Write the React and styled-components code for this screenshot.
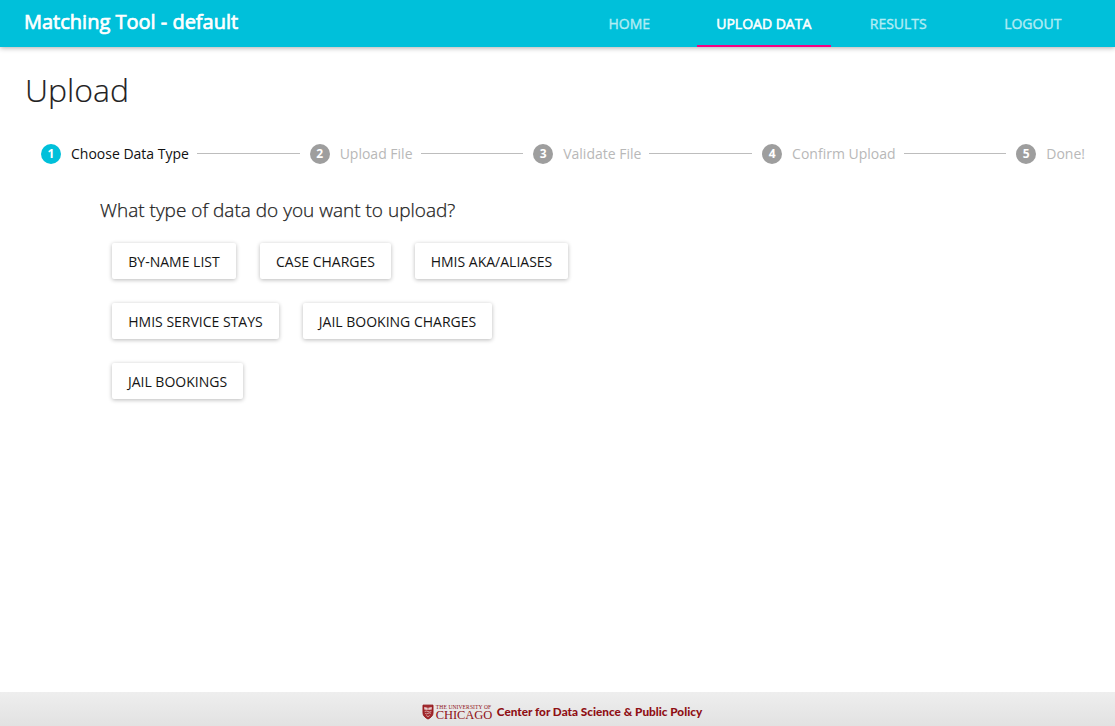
import React from "react";
import styled, { createGlobalStyle } from "styled-components";

const GlobalStyle = createGlobalStyle`
  *, *::before, *::after { box-sizing: border-box; }
  html, body { margin: 0; height: 100%; background: #fff; }
  body { font-family: "Open Sans", "Noto Sans", sans-serif; }
`;

const Page = styled.div`
  display: flex;
  flex-direction: column;
  height: 100vh;
  overflow: hidden;
`;

const AppBar = styled.header`
  display: flex;
  justify-content: space-between;
  flex: none;
  height: 47px;
  padding: 0 15px 0 24px;
  background: #00c0da;
  box-shadow: 0 1px 5px rgba(0, 0, 0, 0.32);
`;

const Brand = styled.div`
  font-size: 20px;
  font-weight: 400;
  line-height: 44px;
  -webkit-text-stroke: 0.7px #fff;
  color: #fff;
  white-space: nowrap;
`;

const Tabs = styled.nav`
  display: flex;
`;

const Tab = styled.a`
  width: 134.5px;
  height: 47px;
  border-bottom: 2px solid ${(p) => (p.$active ? "#f50083" : "transparent")};
  color: ${(p) => (p.$active ? "#fff" : "#b2ecf4")};
  font-size: 14px;
  font-weight: 400;
  -webkit-text-stroke: ${(p) => (p.$active ? "0.55px" : "0.4px")} currentColor;
  line-height: 48px;
  text-align: center;
  white-space: nowrap;
`;

const Main = styled.main`
  flex: 1;
`;

const Title = styled.h1`
  margin: 0;
  padding: 20px 0 0 25px;
  font-size: 32px;
  font-weight: 300;
  line-height: 46px;
  -webkit-text-stroke: 0.15px #212121;
  color: #212121;
`;

const Stepper = styled.div`
  display: flex;
  align-items: center;
  height: 40px;
  margin: 21px 30px 0 41px;
`;

const StepNumber = styled.span`
  flex: none;
  width: 20px;
  height: 20px;
  margin-right: 10px;
  border-radius: 50%;
  background: ${(p) => (p.$active ? "#00c0da" : "#9e9e9e")};
  color: #fff;
  font-size: 12px;
  font-weight: 700;
  line-height: 20px;
  text-align: center;
`;

const StepLabel = styled.span`
  flex: none;
  font-size: 14px;
  font-weight: 400;
  line-height: 20px;
  color: ${(p) => (p.$active ? "#111" : "#b8b8b8")};
  white-space: nowrap;
`;

const Connector = styled.span`
  flex: 1;
  height: 1px;
  margin: 0 10px 1px 8px;
  background: #bdbdbd;
`;

const Content = styled.section`
  width: 520px;
  margin: 24px 0 0 100px;
`;

const Question = styled.h2`
  margin: 0 0 8px;
  font-size: 19px;
  font-weight: 300;
  line-height: 25px;
  -webkit-text-stroke: 0.25px #1c1c1c;
  color: #1c1c1c;
  white-space: nowrap;
`;

const Choices = styled.div`
  display: flex;
  flex-wrap: wrap;
  gap: 24px;
  padding: 12px;
`;

const Choice = styled.button`
  width: ${(p) => p.$width}px;
  height: 36px;
  padding: 0;
  border: 0;
  border-radius: 2px;
  background: #fff;
  box-shadow: 0 1px 4px rgba(0, 0, 0, 0.28);
  color: #151515;
  font: 400 14px/37px "Open Sans", "Noto Sans", sans-serif;
  text-align: center;
  white-space: nowrap;
`;

const Footer = styled.footer`
  display: flex;
  justify-content: center;
  flex: none;
  height: 34px;
  padding: 12px 0 0 9px;
  background: linear-gradient(#eee, #e2e2e2);
  color: #8f0f14;
`;

const Shield = styled.svg`
  width: 12px;
  height: 16px;
  margin-right: 2px;
`;

const Wordmark = styled.div`
  width: 57px;
  margin-right: 4px;
  font-family: "Liberation Serif", serif;
  white-space: nowrap;
`;

const WordmarkTop = styled.div`
  font-size: 5.5px;
  line-height: 6px;
  letter-spacing: 0.12px;
`;

const WordmarkName = styled.div`
  font-size: 12.5px;
  line-height: 10px;
  letter-spacing: -0.1px;
`;

const Center = styled.div`
  font-family: Lato, sans-serif;
  font-size: 11.75px;
  font-weight: 900;
  line-height: 16px;
  white-space: nowrap;
`;

const tabs = ["HOME", "UPLOAD DATA", "RESULTS", "LOGOUT"];
const steps = ["Choose Data Type", "Upload File", "Validate File", "Confirm Upload", "Done!"];
const choices = [
  ["BY-NAME LIST", 124],
  ["CASE CHARGES", 131],
  ["HMIS AKA/ALIASES", 153],
  ["HMIS SERVICE STAYS", 167],
  ["JAIL BOOKING CHARGES", 189],
  ["JAIL BOOKINGS", 131],
];

export default function App() {
  return (
    <Page>
      <GlobalStyle />
      <AppBar>
        <Brand>Matching Tool - default</Brand>
        <Tabs>
          {tabs.map((t, i) => (
            <Tab key={t} $active={i === 1}>{t}</Tab>
          ))}
        </Tabs>
      </AppBar>
      <Main>
        <Title>Upload</Title>
        <Stepper>
          {steps.map((s, i) => (
            <React.Fragment key={s}>
              {i > 0 && <Connector />}
              <StepNumber $active={i === 0}>{i + 1}</StepNumber>
              <StepLabel $active={i === 0}>{s}</StepLabel>
            </React.Fragment>
          ))}
        </Stepper>
        <Content>
          <Question>What type of data do you want to upload?</Question>
          <Choices>
            {choices.map(([label, width]) => (
              <Choice key={label} $width={width}>{label}</Choice>
            ))}
          </Choices>
        </Content>
      </Main>
      <Footer>
        <Shield viewBox="0 0 12 17">
          <path d="M.7 1.200h10.600v8.200c0 3-2 4.800-5.300 6.600C2.700 14.200.7 12.400.7 9.400z" fill="#a3292d" stroke="#8f0f14" />
          <path d="M2 3.200 5.700 3.900v2.600L2 5.800zM10 3.200 6.300 3.900v2.600l3.700-.7z" fill="#e6cccc" />
          <path d="M2.500 8q1.700-1 3.500 0t3.500 0M3 10q1.500 1 3 0t3 0M4.200 12.200 6 13.500l1.800-1.300" fill="none" stroke="#dcb5b5" strokeWidth=".9" />
        </Shield>
        <Wordmark>
          <WordmarkTop>THE UNIVERSITY OF</WordmarkTop>
          <WordmarkName>CHICAGO</WordmarkName>
        </Wordmark>
        <Center>Center for Data Science &amp; Public Policy</Center>
      </Footer>
    </Page>
  );
}
